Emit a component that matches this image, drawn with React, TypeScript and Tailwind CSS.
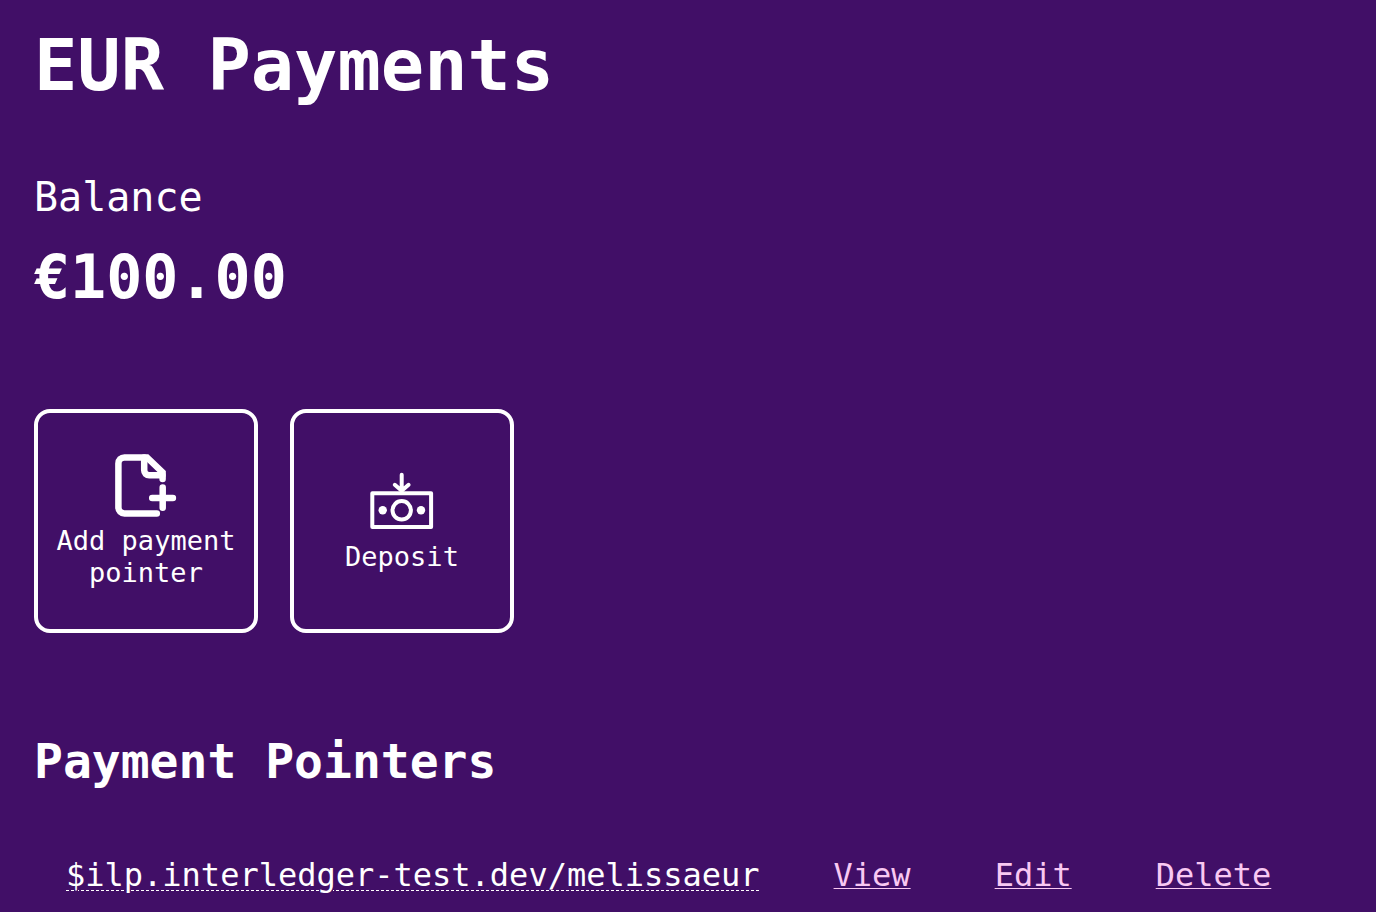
import type { ReactNode } from "react";

function AddPointerIcon() {
  return (
    <svg
      viewBox="0 0 64 64"
      className="size-16"
      fill="none"
      stroke="currentColor"
      strokeWidth="6.5"
      strokeLinecap="round"
      aria-hidden="true"
    >
      <path d="M42.8 60.4H10.4a6 6 0 0 1-6-6V10.4a6 6 0 0 1 6-6H33L48.6 19.4V26" strokeLinejoin="miter" />
      <path d="M30.2 4.6V17.3a5 5 0 0 0 5 5H48.4" />
      <path d="M48.7 34.4V54.8M38.2 45H58.9" />
    </svg>
  );
}

function DepositIcon() {
  return (
    <svg
      viewBox="0 0 64 64"
      className="size-16"
      fill="none"
      stroke="currentColor"
      strokeWidth="4"
      strokeLinecap="round"
      strokeLinejoin="round"
      aria-hidden="true"
    >
      <path d="M31.7 5.7V22M24.8 15.8L31.7 21.8L38.6 15.8" />
      <rect x="2.3" y="24.2" width="58.8" height="33.8" />
      <circle cx="31.7" cy="41.3" r="9.2" />
      <circle cx="12.7" cy="41.3" r="4.2" fill="currentColor" stroke="none" />
      <circle cx="51" cy="41.3" r="4.2" fill="currentColor" stroke="none" />
    </svg>
  );
}

function ActionCard({ icon, children }: { icon: ReactNode; children: ReactNode }) {
  return (
    <button
      type="button"
      className="flex size-56 flex-col items-center justify-center gap-2 rounded-2xl border-4 border-white px-4 text-center text-[27px] leading-8"
    >
      {icon}
      <span>{children}</span>
    </button>
  );
}

const pointers = ["$ilp.interledger-test.dev/melissaeur"];
const actions = ["View", "Edit", "Delete"];

export default function App() {
  return (
    <main className="min-h-screen bg-[#410f67] px-[34px] pt-[21px] font-['DejaVu_Sans_Mono',monospace] text-white">
      <h1 className="text-[72px] leading-[88px] font-bold">EUR Payments</h1>

      <section className="mt-16">
        <h2 className="text-[40px] leading-[48px]">Balance</h2>
        <p className="mt-5 text-[60px] leading-[72px] font-bold">€100.00</p>
      </section>

      <div className="mt-24 flex flex-wrap gap-8">
        <ActionCard icon={<AddPointerIcon />}>Add payment pointer</ActionCard>
        <ActionCard icon={<DepositIcon />}>Deposit</ActionCard>
      </div>

      <section className="mt-24">
        <h2 className="text-[48px] leading-[64px] font-bold">Payment Pointers</h2>
        <table className="mt-16 text-[32px] leading-[36px]">
          <tbody>
            {pointers.map((pointer) => (
              <tr key={pointer}>
                <td className="pr-[74px] pl-8">
                  <span className="underline decoration-dashed decoration-1 underline-offset-4">{pointer}</span>
                </td>
                {actions.map((action) => (
                  <td key={action} className="pr-[84px] last:pr-0">
                    <a href="#" className="text-[#f9c8f2] underline decoration-1 underline-offset-2">
                      {action}
                    </a>
                  </td>
                ))}
              </tr>
            ))}
          </tbody>
        </table>
      </section>
    </main>
  );
}
